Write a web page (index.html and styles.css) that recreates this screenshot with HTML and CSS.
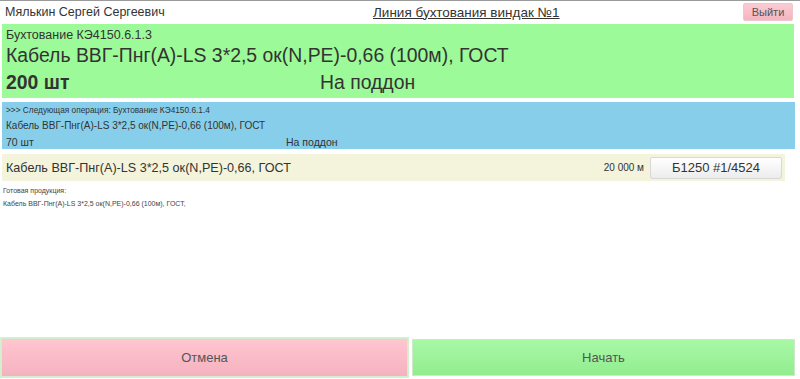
FILE: index.html
```html
<!DOCTYPE html>
<html lang="ru">
<head>
<meta charset="utf-8">
<link rel="stylesheet" href="styles.css">
</head>
<body>
<div class="page">
  <header class="top">
    <div class="user">Мялькин Сергей Сергеевич</div>
    <div class="line-title">Линия бухтования виндак №1</div>
    <button class="exit">Выйти</button>
  </header>

  <section class="op current">
    <div class="op-name">Бухтование КЭ4150.6.1.3</div>
    <div class="product">Кабель ВВГ-Пнг(A)-LS 3*2,5 ок(N,PE)-0,66 (100м), ГОСТ</div>
    <div class="qty-row">
      <div class="qty">200 шт</div>
      <div class="dest">На поддон</div>
    </div>
  </section>

  <section class="op next">
    <div class="op-name">&gt;&gt;&gt; Следующая операция: Бухтование КЭ4150.6.1.4</div>
    <div class="product">Кабель ВВГ-Пнг(A)-LS 3*2,5 ок(N,PE)-0,66 (100м), ГОСТ</div>
    <div class="qty-row">
      <div class="qty">70 шт</div>
      <div class="dest">На поддон</div>
    </div>
  </section>

  <section class="material">
    <div class="mat-name">Кабель ВВГ-Пнг(A)-LS 3*2,5 ок(N,PE)-0,66, ГОСТ</div>
    <div class="mat-len">20 000 м</div>
    <button class="drum">Б1250 #1/4524</button>
  </section>

  <section class="finished">
    <div class="fin-label">Готовая продукция:</div>
    <div class="fin-item">Кабель ВВГ-Пнг(A)-LS 3*2,5 ок(N,PE)-0,66 (100м), ГОСТ,</div>
  </section>

  <footer class="actions">
    <button class="btn cancel">Отмена</button>
    <button class="btn start">Начать</button>
  </footer>
</div>
</body>
</html>
```

FILE: styles.css
```css
html, body {
  margin: 0;
  padding: 0;
  background: #fff;
}
body {
  font-family: "Liberation Sans", Arial, sans-serif;
  color: #333;
}
.page {
  height: 379px;
  box-sizing: border-box;
  border-top: 1px solid #9a9a9a;
  display: flex;
  flex-direction: column;
}
.top {
  display: grid;
  grid-template-columns: 368px auto 1fr;
  align-items: center;
  height: 22px;
  padding: 0 7px 0 5px;
}
.user {
  font-size: 12.5px;
}
.line-title {
  font-size: 13.5px;
  text-decoration: underline;
}
.exit {
  justify-self: end;
  font-family: inherit;
  font-size: 11px;
  color: #555;
  width: 50px;
  height: 18px;
  padding: 0;
  border: 1px solid #efc6cc;
  border-radius: 2px;
  background: linear-gradient(#fccbd3, #f4b5c0);
}
.op {
  margin: 1px 6px 0 2px;
  padding: 3px 4px;
}
.current {
  background: #9cfa98;
  height: 74px;
  box-sizing: border-box;
  padding-top: 4px;
}
.current .op-name {
  font-size: 12.5px;
  line-height: 15px;
}
.current .product {
  font-size: 19.4px;
  line-height: 25px;
}
.current .qty-row {
  display: grid;
  grid-template-columns: 314px 1fr;
  font-size: 19.4px;
  line-height: 28px;
}
.current .qty {
  font-weight: bold;
}
.next {
  background: #87ceea;
  margin-top: 4px;
  margin-right: 5px;
  height: 47px;
  box-sizing: border-box;
  padding-top: 2px;
}
.next .op-name {
  font-size: 8.3px;
  line-height: 13px;
}
.next .product {
  font-size: 10px;
  line-height: 17px;
}
.next .qty-row {
  display: grid;
  grid-template-columns: 280px 1fr;
  font-size: 10.5px;
  line-height: 16px;
}
.material {
  display: flex;
  align-items: center;
  margin: 5px 15px 0 2px;
  height: 27px;
  padding: 0 3px 0 4px;
  background: #f4f4dc;
}
.mat-name {
  flex: 1;
  font-size: 12.6px;
}
.mat-len {
  font-size: 10px;
  margin-right: 6px;
}
.drum {
  width: 132px;
  height: 22px;
  font-family: inherit;
  font-size: 13px;
  color: #333;
  padding: 0;
  border: 1px solid #d8d8d8;
  border-radius: 2px;
  background: linear-gradient(#ffffff, #ececec);
}
.finished {
  padding: 3px 3px;
  font-size: 7px;
  line-height: 13px;
  color: #444;
}
.actions {
  margin-top: auto;
  display: flex;
  gap: 4px;
  padding: 0 5px 2px 0;
}
.btn {
  font-family: inherit;
  font-size: 13px;
  color: #555;
  height: 39px;
  padding: 0;
  border-radius: 0;
}
.cancel {
  width: 407px;
  border: 1px solid #cfeecb;
  outline: 1px solid #d4f0cf;
  background: linear-gradient(#ffc6d0, #f4b2bf);
  margin-left: 1px;
}
.start {
  flex: 1;
  height: 37px;
  margin-top: 1px;
  border: 1px solid #cde8cb;
  background: linear-gradient(#a8f8a6, #92ed8f);
}
```
